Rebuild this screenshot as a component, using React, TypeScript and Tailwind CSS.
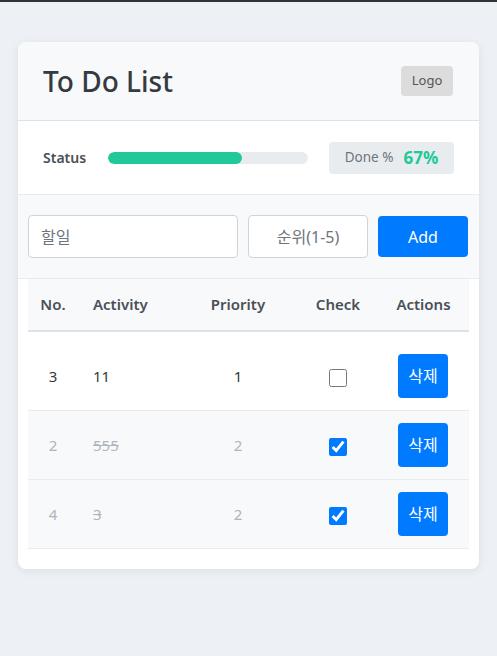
import { useState } from 'react'

type Todo = { id: number; text: string; priority: number; done: boolean }

const initial: Todo[] = [
  { id: 3, text: '11', priority: 1, done: false },
  { id: 2, text: '555', priority: 2, done: true },
  { id: 4, text: '3', priority: 2, done: true },
]

export default function App() {
  const [todos, setTodos] = useState(initial)
  const pct = Math.round((todos.filter((t) => t.done).length / todos.length) * 100)

  return (
    <div
      className="min-h-[656px] border-t-2 border-[#333] bg-[#edf0f4] px-[18px] pt-10"
      style={{ fontFamily: '"Noto Sans", "Noto Sans CJK KR", sans-serif' }}
    >
      <div className="overflow-hidden rounded-lg bg-white pb-5 shadow-[0_2px_10px_rgba(0,0,0,0.08)]">
        {/* Header */}
        <div className="flex h-[79px] items-center justify-between border-b border-[#dee2e6] bg-[#f8f9fa] px-[25px]">
          <h1 className="text-[28px] font-medium text-[#343a40]">To Do List</h1>
          <div className="mr-[1px] flex h-[30px] w-[52px] items-center justify-center rounded bg-[#dcdcdc] text-[13px] text-[#555]">
            Logo
          </div>
        </div>

        {/* Status */}
        <div className="flex h-[74px] items-center border-b border-[#e9ecef] px-[25px]">
          <span className="w-[65px] text-[14px] font-semibold text-[#495057]">Status</span>
          <div className="h-3 w-[200px] overflow-hidden rounded-full bg-[#e9ecef]">
            <div className="h-full rounded-full bg-[#20c997]" style={{ width: `${pct}%` }} />
          </div>
          <div className="ml-auto flex h-[32px] w-[125px] items-center justify-center gap-[10px] rounded bg-[#e9ecef]">
            <span className="text-[13.5px] text-[#6c757d]">Done %</span>
            <span className="text-[17px] font-bold text-[#20c997]">{pct}%</span>
          </div>
        </div>

        {/* Input */}
        <div className="flex h-[84px] items-center gap-[10px] border-b border-[#e9ecef] bg-[#f8f9fa] px-[10px]">
          <input
            placeholder="할일"
            className="h-[43px] w-[210px] rounded border border-[#ced4da] bg-white px-3 text-[16px] placeholder:text-[#6c757d]"
          />
          <input
            placeholder="순위(1-5)"
            className="h-[43px] w-[120px] rounded border border-[#ced4da] bg-white px-3 text-center text-[16px] placeholder:text-[#6c757d]"
          />
          <button className="h-[41px] w-[90px] rounded bg-[#007bff] text-[16px] text-white">Add</button>
        </div>

        {/* Table */}
        <div className="px-[10px]">
          <table className="w-full border-collapse text-[15px]">
            <thead>
              <tr className="h-[52px] border-b-2 border-[#dee2e6] bg-[#f8f9fa] text-[15px] text-[#495057]">
                <th className="w-[50px] text-center font-semibold">No.</th>
                <th className="w-[100px] pl-[15px] text-left font-semibold">Activity</th>
                <th className="w-[120px] text-center font-semibold">Priority</th>
                <th className="w-[80px] text-center font-semibold">Check</th>
                <th className="text-center font-semibold">Actions</th>
              </tr>
            </thead>
            <tbody>
              {todos.map((t, i) => {
                const pad = i === 0 ? 'pt-[22px] pb-3' : 'py-3'
                return (
                  <tr
                    key={t.id}
                    className={`border-b border-[#e9ecef] ${t.done ? 'bg-[#f8f9fa] text-[#adb5bd]' : 'bg-white text-[#343a40]'}`}
                  >
                    <td className={`text-center ${pad}`}>{t.id}</td>
                    <td className={`pl-[15px] ${t.done ? 'line-through' : ''} ${pad}`}>{t.text}</td>
                    <td className={`text-center ${pad}`}>{t.priority}</td>
                    <td className={`text-center ${pad}`}>
                      <input
                        type="checkbox"
                        checked={t.done}
                        onChange={() =>
                          setTodos(todos.map((x) => (x.id === t.id ? { ...x, done: !x.done } : x)))
                        }
                        className="h-[18px] w-[18px] align-middle accent-[#007bff]"
                      />
                    </td>
                    <td className={`pr-[1px] text-center ${pad}`}>
                      <button className="h-[44px] w-[50px] rounded bg-[#007bff] text-[16px] text-white">
                        삭제
                      </button>
                    </td>
                  </tr>
                )
              })}
            </tbody>
          </table>
        </div>
      </div>
    </div>
  )
}
